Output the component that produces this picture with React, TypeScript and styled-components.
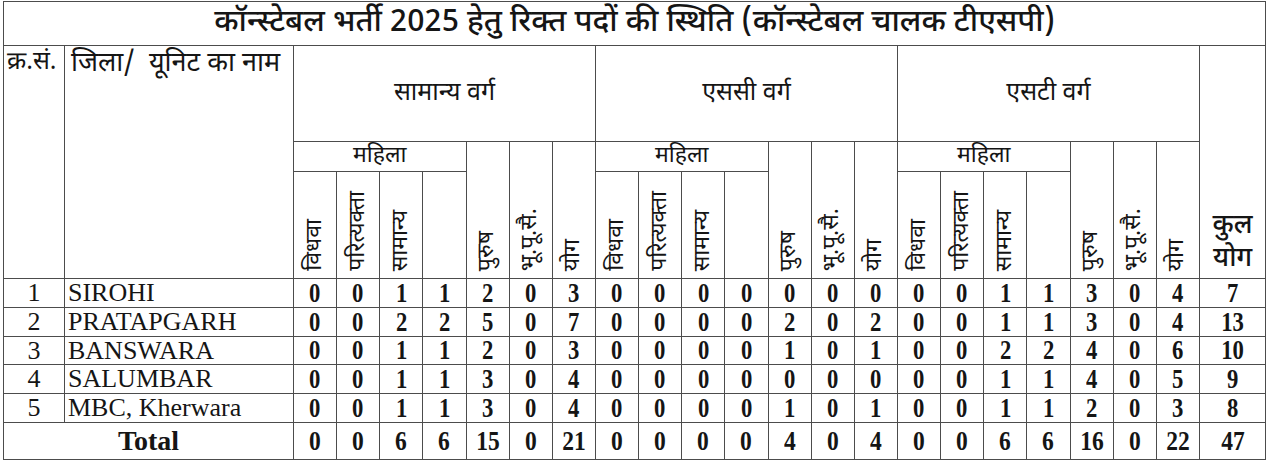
import React from 'react';
import styled, { createGlobalStyle } from 'styled-components';

const HINDI = `"Noto Sans Devanagari", "Lohit Devanagari", "Mukta", "FreeSans", "Noto Sans", sans-serif`;
const SERIF = `"Liberation Serif", "Times New Roman", serif`;
const LINE = '#4c4c4c';

const GlobalStyle = createGlobalStyle`
  body {
    margin: 0;
    background: #ffffff;
  }
`;

/* TABLE STYLES */
const Sheet = styled.div`
  padding: 1px 3px 0 3px;
`;

const Table = styled.table`
  width: 1262px;
  border-collapse: collapse;
  table-layout: fixed;
  color: #151515;

  th,
  td {
    border: 1.5px solid ${LINE};
    padding: 0;
  }
`;

const TitleCell = styled.th`
  height: 43px;
  font-family: ${HINDI};
  font-size: 31px;
  font-weight: 500;
  text-align: center;
  vertical-align: middle;
  white-space: nowrap;
  line-height: 1.2;
`;

const TopLabel = styled.th<{ $pad: number; $size: number }>`
  font-family: ${HINDI};
  font-size: ${(p) => p.$size}px;
  font-weight: 400;
  text-align: left;
  vertical-align: top;
  white-space: nowrap;
  padding: 1px 0 0 ${(p) => p.$pad}px !important;
  line-height: 1.3;
`;

const GroupCell = styled.th<{ $h: number; $size: number }>`
  height: ${(p) => p.$h}px;
  font-family: ${HINDI};
  font-size: ${(p) => p.$size}px;
  font-weight: 400;
  text-align: center;
  vertical-align: middle;
  line-height: 1.2;
`;

const TotalHead = styled.th`
  font-family: ${HINDI};
  font-size: 27px;
  font-weight: 500;
  line-height: 1.2;
  text-align: center;
  vertical-align: bottom;
  padding-bottom: 2px !important;
`;

const VerticalCell = styled.th`
  height: 103px;
  vertical-align: bottom;
  text-align: center;
  padding-bottom: 3px !important;
`;

const VerticalText = styled.span`
  display: inline-block;
  writing-mode: vertical-rl;
  transform: rotate(180deg);
  font-family: ${HINDI};
  font-size: 23px;
  font-weight: 400;
  line-height: 1;
  white-space: nowrap;
`;

const Row = styled.tr<{ $h: number }>`
  height: ${(p) => p.$h}px;
`;

const SerialCell = styled.td`
  font-family: ${SERIF};
  font-size: 26px;
  text-align: center;
  line-height: 1;
`;

const NameCell = styled.td`
  font-family: ${SERIF};
  font-size: 26px;
  text-align: left;
  padding-left: 3px !important;
  line-height: 1;
  white-space: nowrap;
`;

const NumCell = styled.td`
  text-align: center;
  line-height: 1;
`;

const Digits = styled.span<{ $size?: number }>`
  display: inline-block;
  font-family: ${SERIF};
  font-size: ${(p) => p.$size ?? 27}px;
  font-weight: 700;
  transform: scaleX(0.84);
`;

const TotalLabel = styled.td`
  font-family: ${SERIF};
  font-size: 28px;
  font-weight: 700;
  text-align: center;
  line-height: 1;
`;

type Section = number[];
interface Unit {
  sn: number;
  name: string;
  gen: Section;
  sc: Section;
  st: Section;
  total: number;
}

const units: Unit[] = [
  { sn: 1, name: 'SIROHI', gen: [0, 0, 1, 1, 2, 0, 3], sc: [0, 0, 0, 0, 0, 0, 0], st: [0, 0, 1, 1, 3, 0, 4], total: 7 },
  { sn: 2, name: 'PRATAPGARH', gen: [0, 0, 2, 2, 5, 0, 7], sc: [0, 0, 0, 0, 2, 0, 2], st: [0, 0, 1, 1, 3, 0, 4], total: 13 },
  { sn: 3, name: 'BANSWARA', gen: [0, 0, 1, 1, 2, 0, 3], sc: [0, 0, 0, 0, 1, 0, 1], st: [0, 0, 2, 2, 4, 0, 6], total: 10 },
  { sn: 4, name: 'SALUMBAR', gen: [0, 0, 1, 1, 3, 0, 4], sc: [0, 0, 0, 0, 0, 0, 0], st: [0, 0, 1, 1, 4, 0, 5], total: 9 },
  { sn: 5, name: 'MBC, Kherwara', gen: [0, 0, 1, 1, 3, 0, 4], sc: [0, 0, 0, 0, 1, 0, 1], st: [0, 0, 1, 1, 2, 0, 3], total: 8 },
];

const totals = {
  gen: [0, 0, 6, 6, 15, 0, 21],
  sc: [0, 0, 0, 0, 4, 0, 4],
  st: [0, 0, 6, 6, 16, 0, 22],
  total: 47,
};

const rowHeights = [29, 29, 28, 29, 29];
const womenCols = ['विधवा', 'परित्यक्ता', 'सामान्य', ''];
const groups = ['सामान्य वर्ग', 'एससी वर्ग', 'एसटी वर्ग'];

const App: React.FC = () => {
  const dataCols = Array.from({ length: 21 });

  return (
    <Sheet>
      <GlobalStyle />
      <Table>
        <colgroup>
          <col style={{ width: 61 }} />
          <col style={{ width: 229 }} />
          {dataCols.map((_, i) => (
            <col key={i} style={{ width: 906 / 21 }} />
          ))}
          <col style={{ width: 66 }} />
        </colgroup>
        <thead>
          <tr>
            <TitleCell colSpan={24}>
              कॉन्स्टेबल भर्ती 2025 हेतु रिक्त पदों की स्थिति (कॉन्स्टेबल चालक टीएसपी)
            </TitleCell>
          </tr>
          <tr>
            <TopLabel rowSpan={3} $pad={3} $size={25}>
              क्र.सं.
            </TopLabel>
            <TopLabel rowSpan={3} $pad={6} $size={27}>
              जिला/&nbsp; यूनिट का नाम
            </TopLabel>
            {groups.map((g) => (
              <GroupCell key={g} colSpan={7} $h={95} $size={25}>
                {g}
              </GroupCell>
            ))}
            <TotalHead rowSpan={3}>
              कुल
              <br />
              योग
            </TotalHead>
          </tr>
          <tr>
            {groups.map((g) => (
              <React.Fragment key={g}>
                <GroupCell colSpan={4} $h={29} $size={23}>
                  महिला
                </GroupCell>
                <VerticalCell rowSpan={2}>
                  <VerticalText>पुरुष</VerticalText>
                </VerticalCell>
                <VerticalCell rowSpan={2}>
                  <VerticalText>भू.पू.सै.</VerticalText>
                </VerticalCell>
                <VerticalCell rowSpan={2}>
                  <VerticalText>योग</VerticalText>
                </VerticalCell>
              </React.Fragment>
            ))}
          </tr>
          <tr>
            {groups.map((g) =>
              womenCols.map((w, i) => (
                <VerticalCell key={g + i}>
                  {w && <VerticalText>{w}</VerticalText>}
                </VerticalCell>
              ))
            )}
          </tr>
        </thead>
        <tbody>
          {units.map((u, r) => (
            <Row key={u.sn} $h={rowHeights[r]}>
              <SerialCell>{u.sn}</SerialCell>
              <NameCell>{u.name}</NameCell>
              {[...u.gen, ...u.sc, ...u.st].map((n, i) => (
                <NumCell key={i}>
                  <Digits>{n}</Digits>
                </NumCell>
              ))}
              <NumCell>
                <Digits>{u.total}</Digits>
              </NumCell>
            </Row>
          ))}
          <Row $h={37}>
            <TotalLabel colSpan={2}>Total</TotalLabel>
            {[...totals.gen, ...totals.sc, ...totals.st].map((n, i) => (
              <NumCell key={i}>
                <Digits $size={28}>{n}</Digits>
              </NumCell>
            ))}
            <NumCell>
              <Digits $size={28}>{totals.total}</Digits>
            </NumCell>
          </Row>
        </tbody>
      </Table>
    </Sheet>
  );
};

export default App;
